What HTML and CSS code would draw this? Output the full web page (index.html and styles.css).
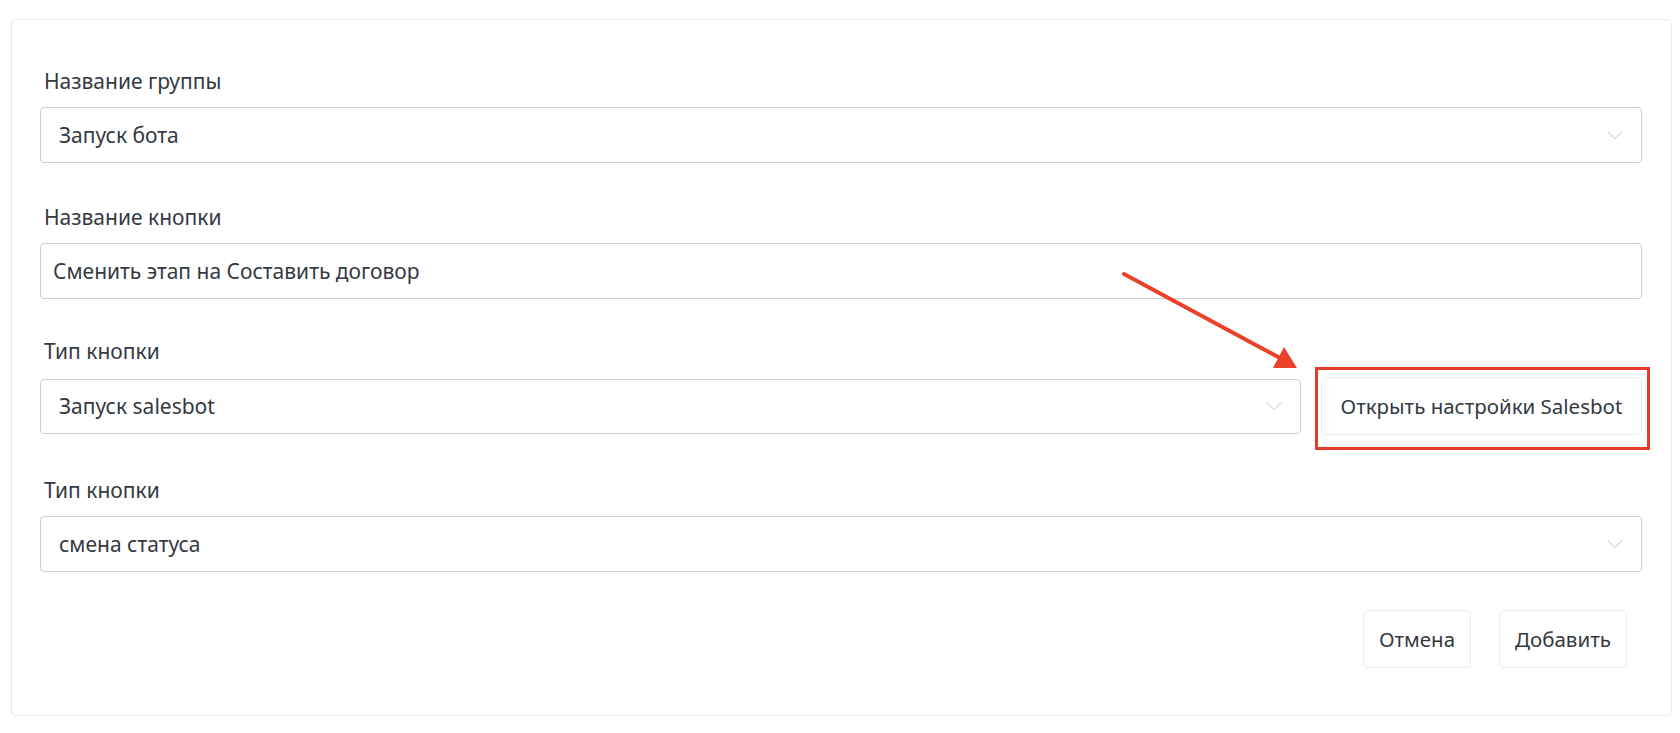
FILE: index.html
```html
<!DOCTYPE html>
<html lang="ru">
<head>
<meta charset="utf-8">
<title>Кнопка</title>
<link rel="stylesheet" href="styles.css">
</head>
<body>
<div class="card">
  <div class="group">
    <div class="label">Название группы</div>
    <div class="select"><span class="value">Запуск бота</span><svg class="chev" viewBox="0 0 16 8" width="16" height="8"><path d="M0.5 0.5 L8 7.5 L15.5 0.5" fill="none" stroke="#d9d9dc" stroke-width="1.1"/></svg></div>
  </div>
  <div class="group">
    <div class="label">Название кнопки</div>
    <div class="input"><span class="value">Сменить этап на Составить договор</span></div>
  </div>
  <div class="group group-row">
    <div class="label">Тип кнопки</div>
    <div class="row">
      <div class="select"><span class="value">Запуск salesbot</span><svg class="chev" viewBox="0 0 16 8" width="16" height="8"><path d="M0.5 0.5 L8 7.5 L15.5 0.5" fill="none" stroke="#d9d9dc" stroke-width="1.1"/></svg></div>
      <div class="btn-wrap">
        <button class="btn btn-open">Открыть настройки Salesbot</button>
        <div class="highlight"></div>
      </div>
    </div>
  </div>
  <div class="group">
    <div class="label">Тип кнопки</div>
    <div class="select"><span class="value">смена статуса</span><svg class="chev" viewBox="0 0 16 8" width="16" height="8"><path d="M0.5 0.5 L8 7.5 L15.5 0.5" fill="none" stroke="#d9d9dc" stroke-width="1.1"/></svg></div>
  </div>
  <div class="actions">
    <button class="btn btn-cancel">Отмена</button>
    <button class="btn btn-add">Добавить</button>
  </div>
  <svg class="arrow" width="1680" height="733" viewBox="0 0 1680 733">
    <line x1="1124" y1="274" x2="1280" y2="358" stroke="#ea4128" stroke-width="4" stroke-linecap="round"/>
    <polygon points="1297,368 1284,347 1273,368" fill="#ea4128"/>
  </svg>
</div>
</body>
</html>
```
FILE: styles.css
```css
html, body {
  margin: 0;
  padding: 0;
  background: #ffffff;
}
body {
  font-family: "Noto Sans", "Open Sans", sans-serif;
  color: #343942;
  padding: 19px 8px 16px 11px;
}
.card {
  box-sizing: border-box;
  height: 697px;
  border: 1px solid #ebebef;
  border-left-color: #e3e3f3;
  border-radius: 5px;
  background: #fff;
  padding: 49px 29px 0 28px;
}
.group {
  margin-bottom: 42px;
}
.group-row {
  margin-top: -2px;
  margin-bottom: 43px;
}
.label {
  font-size: 21px;
  line-height: 24px;
  height: 24px;
  margin-bottom: 14px;
  padding-left: 4px;
  white-space: nowrap;
}
.select, .input {
  box-sizing: border-box;
  height: 56px;
  border: 1px solid #cfcfd2;
  border-radius: 4px;
  display: flex;
  align-items: center;
  justify-content: space-between;
  font-size: 21px;
  padding: 0 18px 0 18px;
  background: #fff;
  white-space: nowrap;
}
.input {
  padding-left: 12px;
}
.chev {
  display: block;
  flex: none;
}
.row {
  display: grid;
  grid-template-columns: 1fr auto;
  column-gap: 20px;
  align-items: center;
}
.row .select {
  height: 55px;
}
.btn-wrap {
  position: relative;
}
.btn {
  box-sizing: border-box;
  height: 58px;
  border: 1px solid #e8ecee;
  border-radius: 5px;
  background: #fff;
  font-family: "Noto Sans", "Open Sans", sans-serif;
  font-size: 20.5px;
  color: #343942;
  padding: 0 12px;
  display: block;
  white-space: nowrap;
  text-align: center;
}
.btn-open {
  width: 321px;
}
.highlight {
  position: absolute;
  left: -6px;
  top: -10px;
  width: 335px;
  height: 83px;
  box-sizing: border-box;
  border: 3px solid #e63b29;
}
.actions {
  display: flex;
  justify-content: flex-end;
  column-gap: 28px;
  margin-top: -4px;
  margin-right: 15px;
}
.btn-cancel {
  width: 108px;
}
.btn-add {
  width: 128px;
}
.arrow {
  position: absolute;
  left: 0;
  top: 0;
  pointer-events: none;
}
```
